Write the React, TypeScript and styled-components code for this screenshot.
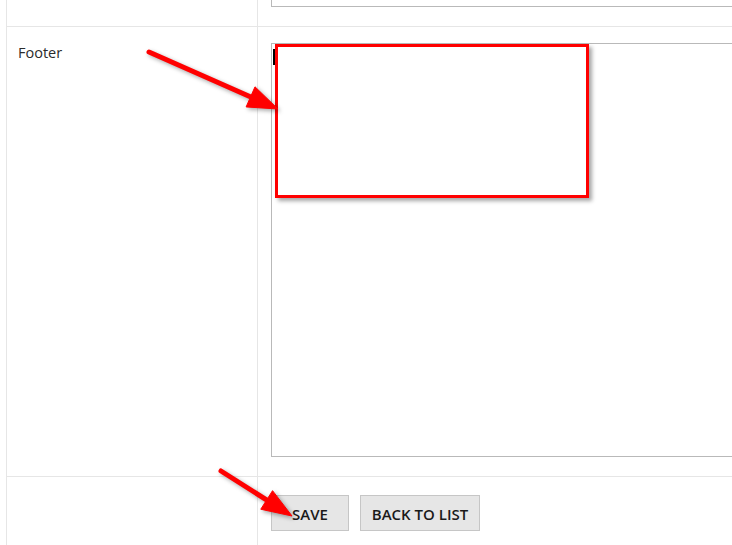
import styled, { createGlobalStyle } from "styled-components";

const GlobalStyle = createGlobalStyle`
  html, body {
    margin: 0;
    padding: 0;
    background: #fff;
    overflow: hidden;
  }
  body {
    font-family: "Open Sans", "Liberation Sans", sans-serif;
    color: #333;
  }
`;

const Page = styled.div`
  position: relative;
  width: 732px;
  height: 545px;
  overflow: hidden;
`;

const Form = styled.div`
  margin-left: 6px;
  border-left: 1px solid #e6e6e6;
`;

const Row = styled.div<{ $first?: boolean }>`
  display: grid;
  grid-template-columns: 251px 1fr;
  border-top: ${(p) => (p.$first ? "none" : "1px solid #e6e6e6")};
`;

const Label = styled.div`
  border-right: 1px solid #e6e6e6;
  padding: 16px 11px 0;
  font-size: 14.5px;
  line-height: 20px;
  color: #2b2b2b;
`;

const Cell = styled.div<{ $top?: number; $bottom?: number }>`
  padding: ${(p) => p.$top ?? 16}px 0 ${(p) => p.$bottom ?? 19}px 13px;
  display: flex;
  gap: 11px;
`;

const Field = styled.div<{ $h: number; $cut?: boolean }>`
  position: relative;
  width: 520px;
  flex: none;
  height: ${(p) => p.$h}px;
  border: 1px solid #b9b9b9;
  border-top: ${(p) => (p.$cut ? "none" : "1px solid #b9b9b9")};
  background: #fff;
`;

const Caret = styled.span`
  position: absolute;
  left: 1px;
  top: 5px;
  width: 2px;
  height: 16px;
  background: #000;
`;

const Button = styled.button<{ $w: number }>`
  width: ${(p) => p.$w}px;
  height: 36px;
  background: #e6e6e6;
  border: 1px solid #c6c6c6;
  border-radius: 0;
  font-family: "Open Sans", "Liberation Sans", sans-serif;
  font-size: 15px;
  font-weight: 600;
  color: #1a1a1a;
  text-transform: uppercase;
  padding: 1px 0 0;
`;

const Highlight = styled.div`
  position: absolute;
  left: 275px;
  top: 44px;
  width: 308px;
  height: 148px;
  border: 3px solid #ff0000;
  box-shadow: 3px 3px 4px rgba(0, 0, 0, 0.35);
`;

const Arrows = styled.svg`
  position: absolute;
  left: 0;
  top: 0;
  pointer-events: none;
  filter: drop-shadow(2px 2px 2px rgba(0, 0, 0, 0.35));
`;

function Arrow({ x1, y1, x2, y2 }: { x1: number; y1: number; x2: number; y2: number }) {
  const dx = x2 - x1;
  const dy = y2 - y1;
  const len = Math.hypot(dx, dy);
  const ux = dx / len;
  const uy = dy / len;
  const head = 30;
  const half = 11;
  const bx = x2 - ux * head;
  const by = y2 - uy * head;
  const px = -uy * half;
  const py = ux * half;
  return (
    <g fill="#ff0000" stroke="#ff0000">
      <line x1={x1} y1={y1} x2={bx + ux * 4} y2={by + uy * 4} strokeWidth={5} strokeLinecap="round" />
      <polygon
        points={`${x2},${y2} ${bx + px},${by + py} ${bx - px},${by - py}`}
        strokeWidth={1}
        strokeLinejoin="round"
      />
    </g>
  );
}

export default function App() {
  return (
    <Page>
      <GlobalStyle />
      <Form>
        <Row $first>
          <Label />
          <Cell $top={0}>
            <Field $h={6} $cut />
          </Cell>
        </Row>
        <Row>
          <Label>Footer</Label>
          <Cell>
            <Field $h={412}>
              <Caret />
            </Field>
          </Cell>
        </Row>
        <Row>
          <Label />
          <Cell $top={18} $bottom={20}>
            <Button $w={78}>Save</Button>
            <Button $w={120}>Back to list</Button>
          </Cell>
        </Row>
      </Form>
      <Highlight />
      <Arrows width={732} height={545}>
        <Arrow x1={149} y1={52} x2={278} y2={109} />
        <Arrow x1={221} y1={471} x2={292} y2={516} />
      </Arrows>
    </Page>
  );
}
